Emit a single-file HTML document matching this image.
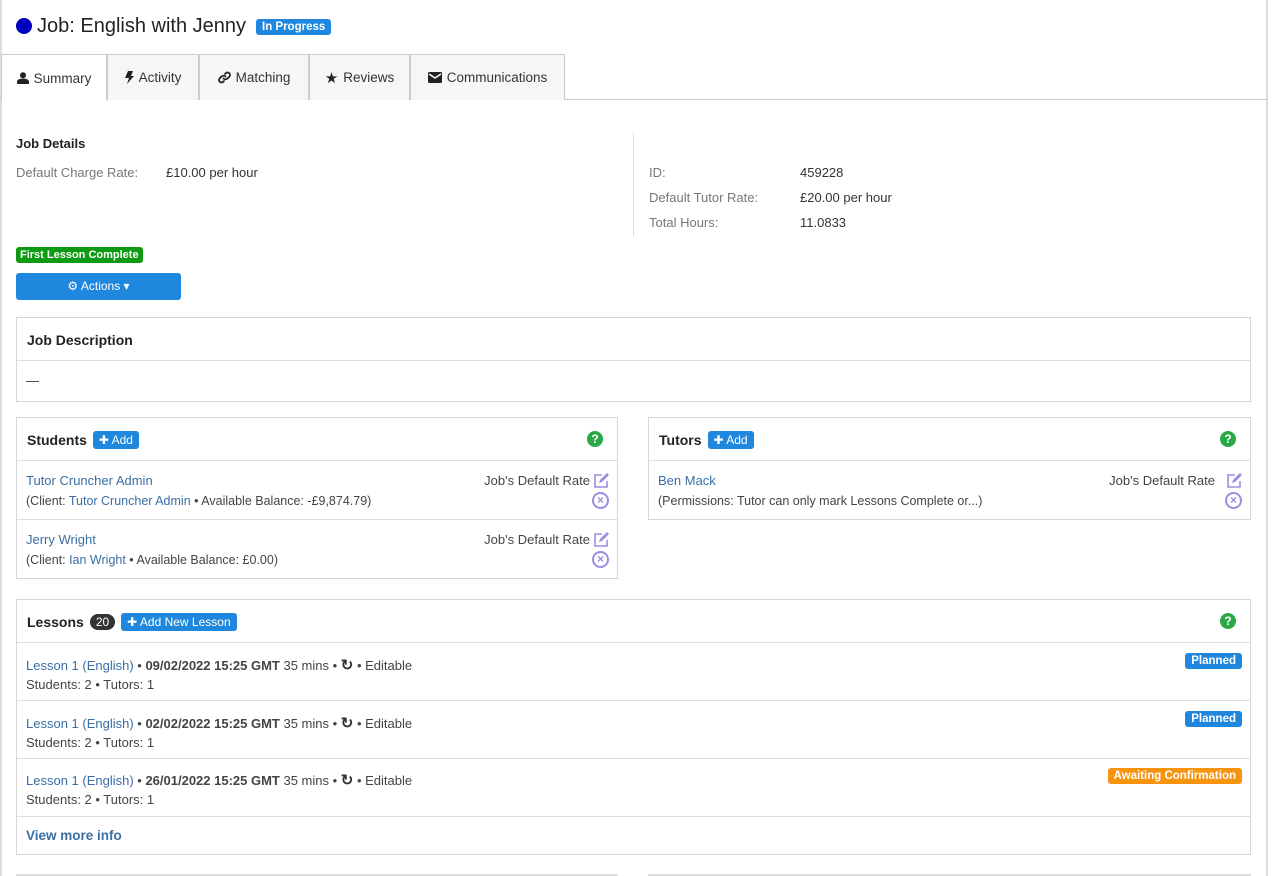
<!DOCTYPE html>
<html><head><meta charset="utf-8"><style>
*{box-sizing:border-box;margin:0;padding:0}
body{width:1274px;height:876px;overflow:hidden;background:#fff;font-family:"Liberation Sans",sans-serif;font-size:13px;color:#444;position:relative}
.a{position:absolute}
.lk{color:#3a6ea5}
.panel{position:absolute;border:1px solid #d6d6d6;background:#fff}
.ph{height:43px;padding:0 10px;display:flex;align-items:center;font-weight:bold;font-size:14px;color:#222}
.btn{background:#1f87dd;color:#fff;border-radius:3px;font-weight:normal;font-size:12px;padding:2px 6px;margin-left:6px}
.help{position:absolute;right:14px;width:16px;height:16px;border-radius:50%;background:#2aa846;color:#fff;font-size:12px;font-weight:bold;text-align:center;line-height:16px}
.row{position:absolute;left:0;right:0;border-top:1px solid #ddd;padding:0 9px}
.badge{position:absolute;color:#fff;font-weight:bold;font-size:11.5px;border-radius:3px;padding:2px 6px}
.tab{position:absolute;top:54px;height:46px;border:1px solid #ccc;border-bottom:none;background:#f6f6f8;display:flex;align-items:center;justify-content:center;color:#333;font-size:13.5px;gap:5px}
.x{position:absolute;width:17px;height:17px;border:2px solid #9b8ee0;border-radius:50%;color:#9b8ee0;font-size:12px;line-height:12px;text-align:center;font-weight:bold}
.ed{position:absolute}
</style></head><body>
<div class="a" style="left:0;top:0;width:2px;height:876px;background:#ddd"></div>
<div class="a" style="left:1266px;top:0;width:2px;height:876px;background:#ddd"></div>
<div class="a" style="left:16px;top:18px;width:16px;height:16px;border-radius:50%;background:#0000c0"></div>
<div class="a" style="left:37px;top:15px;font-size:20px;color:#222">Job: English with Jenny</div>
<div class="badge" style="left:256px;top:19px;background:#1f87dd;font-size:11.5px">In Progress</div>
<div class="a" style="left:0;top:99px;width:1268px;height:1px;background:#ccc"></div>
<div class="tab" style="left:1px;width:106px;background:#fff;height:47px"><svg width="12" height="12" viewBox="0 0 12 12"><circle cx="6" cy="3.2" r="3" fill="#222"/><path d="M0 12v-2c0-2 2-3.5 6-3.5s6 1.5 6 3.5v2z" fill="#222"/></svg>Summary</div>
<div class="tab" style="left:107px;width:92px"><svg width="9" height="13" viewBox="0 0 9 13"><path d="M3 0h5L6 5h3L2 13l2-6H0z" fill="#222"/></svg>Activity</div>
<div class="tab" style="left:199px;width:110px"><svg width="13" height="13" viewBox="0 0 13 13"><path d="M5.5 7.5a3 3 0 0 0 4 0l2-2a2.5 2.5 0 0 0-3.5-3.5l-1 1M7.5 5.5a3 3 0 0 0-4 0l-2 2a2.5 2.5 0 0 0 3.5 3.5l1-1" stroke="#222" stroke-width="1.8" fill="none" stroke-linecap="round"/></svg>Matching</div>
<div class="tab" style="left:309px;width:101px"><span style="color:#222;font-size:15px">★</span>Reviews</div>
<div class="tab" style="left:410px;width:155px"><svg width="14" height="11" viewBox="0 0 14 11"><rect width="14" height="11" rx="1.5" fill="#222"/><path d="M1 2l6 4 6-4" stroke="#fff" stroke-width="1.4" fill="none"/></svg>Communications</div>

<div class="a" style="left:16px;top:136px;font-weight:bold;color:#222">Job Details</div>
<div class="a" style="left:16px;top:165px;color:#777">Default Charge Rate:</div>
<div class="a" style="left:166px;top:165px;color:#333">£10.00 per hour</div>
<div class="a" style="left:633px;top:133px;width:1px;height:103px;background:#ddd"></div>
<div class="a" style="left:649px;top:165px;color:#777">ID:</div><div class="a" style="left:800px;top:165px;color:#333">459228</div>
<div class="a" style="left:649px;top:190px;color:#777">Default Tutor Rate:</div><div class="a" style="left:800px;top:190px;color:#333">£20.00 per hour</div>
<div class="a" style="left:649px;top:215px;color:#777">Total Hours:</div><div class="a" style="left:800px;top:215px;color:#333">11.0833</div>
<div class="badge" style="left:16px;top:247px;background:#0e9a12;font-size:11px;padding:2px 4px">First Lesson Complete</div>
<div class="a" style="left:16px;top:273px;width:165px;height:27px;background:#1f87dd;border-radius:3px;color:#fff;font-size:12px;text-align:center;line-height:27px">⚙ Actions ▾</div>

<div class="panel" style="left:16px;top:317px;width:1235px;height:85px">
<div class="ph">Job Description</div>
<div class="row" style="top:42px;height:42px"><div class="a" style="top:12px;color:#333">—</div></div></div>

<div class="panel" style="left:16px;top:417px;width:602px;height:162px">
<div class="ph">Students<span class="btn">✚ Add</span><span class="help" style="top:13px">?</span></div>
<div class="row" style="top:42px;height:59px"><div class="a lk" style="top:12px">Tutor Cruncher Admin</div><div class="a" style="top:33px;font-size:12.5px">(Client: <span class="lk">Tutor Cruncher Admin</span> • Available Balance: -£9,874.79)</div><div class="a" style="right:27px;top:12px">Job's Default Rate</div><svg class="ed" style="right:8px;top:12px" width="16" height="15" viewBox="0 0 16 15"><path d="M9 2H2v12h12V8" stroke="#9b8ee0" stroke-width="1.6" fill="none"/><path d="M6 10l1-3 7-7 2 2-7 7z" fill="#9b8ee0"/></svg><div class="x" style="right:8px;top:31px">×</div></div>
<div class="row" style="top:101px;height:59px"><div class="a lk" style="top:12px">Jerry Wright</div><div class="a" style="top:33px;font-size:12.5px">(Client: <span class="lk">Ian Wright</span> • Available Balance: £0.00)</div><div class="a" style="right:27px;top:12px">Job's Default Rate</div><svg class="ed" style="right:8px;top:12px" width="16" height="15" viewBox="0 0 16 15"><path d="M9 2H2v12h12V8" stroke="#9b8ee0" stroke-width="1.6" fill="none"/><path d="M6 10l1-3 7-7 2 2-7 7z" fill="#9b8ee0"/></svg><div class="x" style="right:8px;top:31px">×</div></div>
</div>

<div class="panel" style="left:648px;top:417px;width:603px;height:103px">
<div class="ph">Tutors<span class="btn">✚ Add</span><span class="help" style="top:13px">?</span></div>
<div class="row" style="top:42px;height:59px"><div class="a lk" style="top:12px">Ben Mack</div><div class="a" style="top:33px;font-size:12.5px">(Permissions: Tutor can only mark Lessons Complete or...)</div><div class="a" style="right:35px;top:12px">Job's Default Rate</div><svg class="ed" style="right:8px;top:12px" width="16" height="15" viewBox="0 0 16 15"><path d="M9 2H2v12h12V8" stroke="#9b8ee0" stroke-width="1.6" fill="none"/><path d="M6 10l1-3 7-7 2 2-7 7z" fill="#9b8ee0"/></svg><div class="x" style="right:8px;top:31px">×</div></div>
</div>

<div class="panel" style="left:16px;top:599px;width:1235px;height:256px">
<div class="ph">Lessons<span style="background:#333;color:#fff;border-radius:9px;font-size:12px;padding:1px 6px;margin-left:6px;font-weight:normal">20</span><span class="btn">✚ Add New Lesson</span><span class="help" style="top:13px">?</span></div>
<div class="row" style="top:42px;height:58px"><div class="a" style="top:13px"><span class="lk">Lesson 1 (English)</span> • <b style="color:#444">09/02/2022 15:25 GMT</b> 35 mins • <b style="color:#333;font-size:15px">↻</b> • Editable</div><div class="a" style="top:34px">Students: 2 • Tutors: 1</div><div class="badge" style="right:8px;top:10px;background:#1f87dd">Planned</div></div>
<div class="row" style="top:100px;height:58px"><div class="a" style="top:13px"><span class="lk">Lesson 1 (English)</span> • <b style="color:#444">02/02/2022 15:25 GMT</b> 35 mins • <b style="color:#333;font-size:15px">↻</b> • Editable</div><div class="a" style="top:34px">Students: 2 • Tutors: 1</div><div class="badge" style="right:8px;top:10px;background:#1f87dd">Planned</div></div>
<div class="row" style="top:158px;height:58px"><div class="a" style="top:12px"><span class="lk">Lesson 1 (English)</span> • <b style="color:#444">26/01/2022 15:25 GMT</b> 35 mins • <b style="color:#333;font-size:15px">↻</b> • Editable</div><div class="a" style="top:33px">Students: 2 • Tutors: 1</div><div class="badge" style="right:8px;top:9px;background:#f7940f">Awaiting Confirmation</div></div>
<div class="row" style="top:216px;height:38px"><div class="a lk" style="top:11px;font-weight:bold;font-size:13.5px">View more info</div></div>
</div>
<div class="a" style="left:16px;top:874px;width:602px;height:2px;background:#ddd"></div>
<div class="a" style="left:648px;top:874px;width:603px;height:2px;background:#ddd"></div>
</body></html>
